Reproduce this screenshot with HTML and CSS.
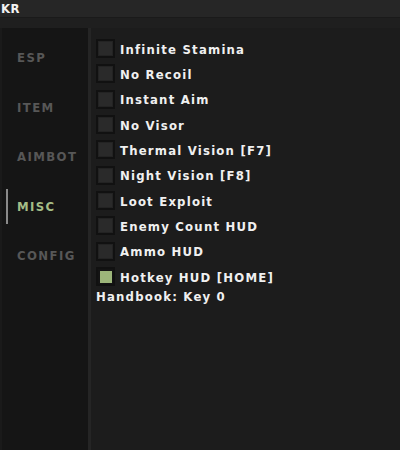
FILE: index.html
```html
<!DOCTYPE html>
<html>
<head>
<meta charset="utf-8">
<link rel="stylesheet" href="styles.css">
</head>
<body>
<div class="app">
  <div class="titlebar">KR</div>
  <div class="subbar"></div>
  <div class="main">
    <nav class="sidebar">
      <div class="tab">ESP</div>
      <div class="tab">ITEM</div>
      <div class="tab">AIMBOT</div>
      <div class="tab active">MISC</div>
      <div class="tab">CONFIG</div>
    </nav>
    <section class="content">
      <div class="row"><span class="box"></span><span class="label">Infinite Stamina</span></div>
      <div class="row"><span class="box"></span><span class="label">No Recoil</span></div>
      <div class="row"><span class="box"></span><span class="label">Instant Aim</span></div>
      <div class="row"><span class="box"></span><span class="label">No Visor</span></div>
      <div class="row"><span class="box"></span><span class="label">Thermal Vision [F7]</span></div>
      <div class="row"><span class="box"></span><span class="label">Night Vision [F8]</span></div>
      <div class="row"><span class="box"></span><span class="label">Loot Exploit</span></div>
      <div class="row"><span class="box"></span><span class="label">Enemy Count HUD</span></div>
      <div class="row"><span class="box"></span><span class="label">Ammo HUD</span></div>
      <div class="row"><span class="box checked"></span><span class="label">Hotkey HUD [HOME]</span></div>
      <div class="note">Handbook: Key 0</div>
    </section>
  </div>
</div>
</body>
</html>
```
FILE: styles.css
```css
* { box-sizing: border-box; }
html, body { margin: 0; padding: 0; background: #1c1c1c; }
body { width: 400px; height: 450px; overflow: hidden; font-family: "DejaVu Sans Condensed", "DejaVu Sans", sans-serif; }
.app { display: flex; flex-direction: column; height: 450px; }
.titlebar {
  height: 17px; background: #262626; color: #f2f2f2;
  font-weight: bold; font-size: 13px; line-height: 17px; padding-left: 1px; letter-spacing: 0.5px;
}
.subbar { height: 11px; background: #1f1f1f; border-top: 1px solid #1a1a1a; }
.main { flex: 1; display: flex; padding-left: 2px; background: #1a1a1a; }
.sidebar {
  width: 86px; background: #151515; display: flex; flex-direction: column;
  padding-top: 22px; position: relative;
}
.tab {
  height: 49.5px; line-height: 14px; padding-left: 15px; padding-top: 1px;
  color: #575757; font-weight: bold; font-size: 13px; letter-spacing: 1.4px;
  position: relative;
}
.tab.active { color: #a5bd86; }
.tab.active::before {
  content: ""; position: absolute; left: 4px; top: -10px; width: 2px; height: 35px; background: #8a8a8a;
}
.content {
  flex: 1; background: #1c1c1c; border-left: 3px solid #252525;
  padding: 11px 0 0 5px; display: flex; flex-direction: column; gap: 6.35px;
}
.row { display: flex; align-items: center; height: 19px; gap: 5px; }
.box {
  width: 19px; height: 19px; background: #2a2a2a; border: 2px solid #111111;
  box-shadow: inset 0 0 0 1px #232323;
  flex: none; display: flex; align-items: center; justify-content: center;
}
.box.checked { background: #141414; box-shadow: none; }
.box.checked::after { content: ""; width: 12px; height: 12px; background: #9db67a; }
.label, .note {
  color: #f0f0f0; font-weight: bold; font-size: 13px; letter-spacing: 1.2px; white-space: nowrap;
}
.label { padding-top: 1px; }
.note { margin-top: -3px; }
```
